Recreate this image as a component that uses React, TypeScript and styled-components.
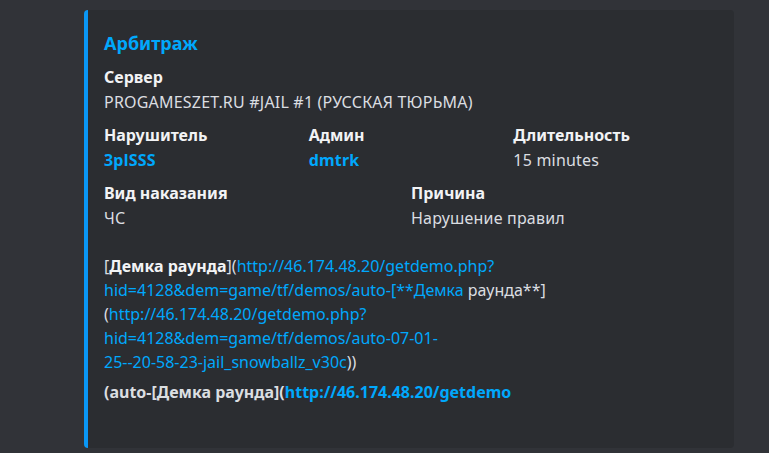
import React from 'react';
import styled, { createGlobalStyle } from 'styled-components';

const Global = createGlobalStyle`
    html, body { margin: 0; padding: 0; background: #313338; }
    body { font-family: 'Noto Sans', 'Open Sans', sans-serif; color: #dbdee1; }
`;

const Page = styled.div`
    width: 769px;
    height: 453px;
    overflow: hidden;
    padding: 10px 35px 0 84px;
    box-sizing: border-box;
    display: flex;
    flex-direction: column;
    gap: 11px;
`;

const Embed = styled.div<{ $height?: number }>`
    background: #2b2d31;
    border-left: 4px solid #0a97f5;
    border-radius: 4px;
    padding: 22px 16px 44px 16px;
    flex-shrink: 0;
    ${(p) => (p.$height !== undefined ? `height: ${p.$height}px; padding: 0;` : '')}
`;

const Title = styled.div`
    color: #00a8fc;
    font-weight: 700;
    font-size: 18px;
    line-height: 22px;
    margin-bottom: 11px;
`;

const Fields = styled.div<{ $cols: number }>`
    display: grid;
    grid-template-columns: repeat(${(p) => p.$cols}, 1fr);
    margin-bottom: 9px;
`;

const Field = styled.div``;

const Name = styled.div`
    font-size: 16px;
    font-weight: 700;
    line-height: 24px;
    color: #f2f3f5;
`;

const Value = styled.div<{ $link?: boolean }>`
    font-size: 16px;
    line-height: 24px;
    margin-top: 1px;
    letter-spacing: 0.2px;
    color: ${(p) => (p.$link ? '#00a8fc' : '#dbdee1')};
    font-weight: ${(p) => (p.$link ? 700 : 400)};
`;

const Description = styled.div`
    margin-top: 24px;
    max-width: 460px;
    font-size: 16px;
    line-height: 24px;
    overflow-wrap: anywhere;
`;

const Para = styled.div`
    margin-top: 6px;
    font-weight: 700;
    font-size: 16px;
    line-height: 24px;
`;

const Link = styled.span`
    color: #00a8fc;
`;

const B = styled.b`
    color: #f2f3f5;
`;

export default function App() {
    return (
        <>
            <Global />
            <Page>
                <Embed>
                    <Title>Арбитраж</Title>
                    <Fields $cols={1}>
                        <Field>
                            <Name>Сервер</Name>
                            <Value>PROGAMESZET.RU #JAIL #1 (РУССКАЯ ТЮРЬМА)</Value>
                        </Field>
                    </Fields>
                    <Fields $cols={3}>
                        <Field>
                            <Name>Нарушитель</Name>
                            <Value $link>3plSSS</Value>
                        </Field>
                        <Field>
                            <Name>Админ</Name>
                            <Value $link>dmtrk</Value>
                        </Field>
                        <Field>
                            <Name>Длительность</Name>
                            <Value>15 minutes</Value>
                        </Field>
                    </Fields>
                    <Fields $cols={2}>
                        <Field>
                            <Name>Вид наказания</Name>
                            <Value>ЧС</Value>
                        </Field>
                        <Field>
                            <Name>Причина</Name>
                            <Value>Нарушение правил</Value>
                        </Field>
                    </Fields>
                    <Description>
                        [<B>Демка раунда</B>](<Link>http://46.174.48.20/getdemo.php?</Link>
                        <br />
                        <Link>hid=4128&amp;dem=game/tf/demos/auto-[**Демка</Link> раунда**]
                        <br />
                        (<Link>http://46.174.48.20/getdemo.php?hid=4128&amp;dem=game/tf/demos/auto-07-01-</Link>
                        <br />
                        <Link>25--20-58-23-jail_snowballz_v30c</Link>))
                    </Description>
                    <Para>
                        (auto-[Демка раунда](<Link>http://46.174.48.20/getdemo</Link>
                    </Para>
                </Embed>
                <Embed $height={40} />
            </Page>
        </>
    );
}
